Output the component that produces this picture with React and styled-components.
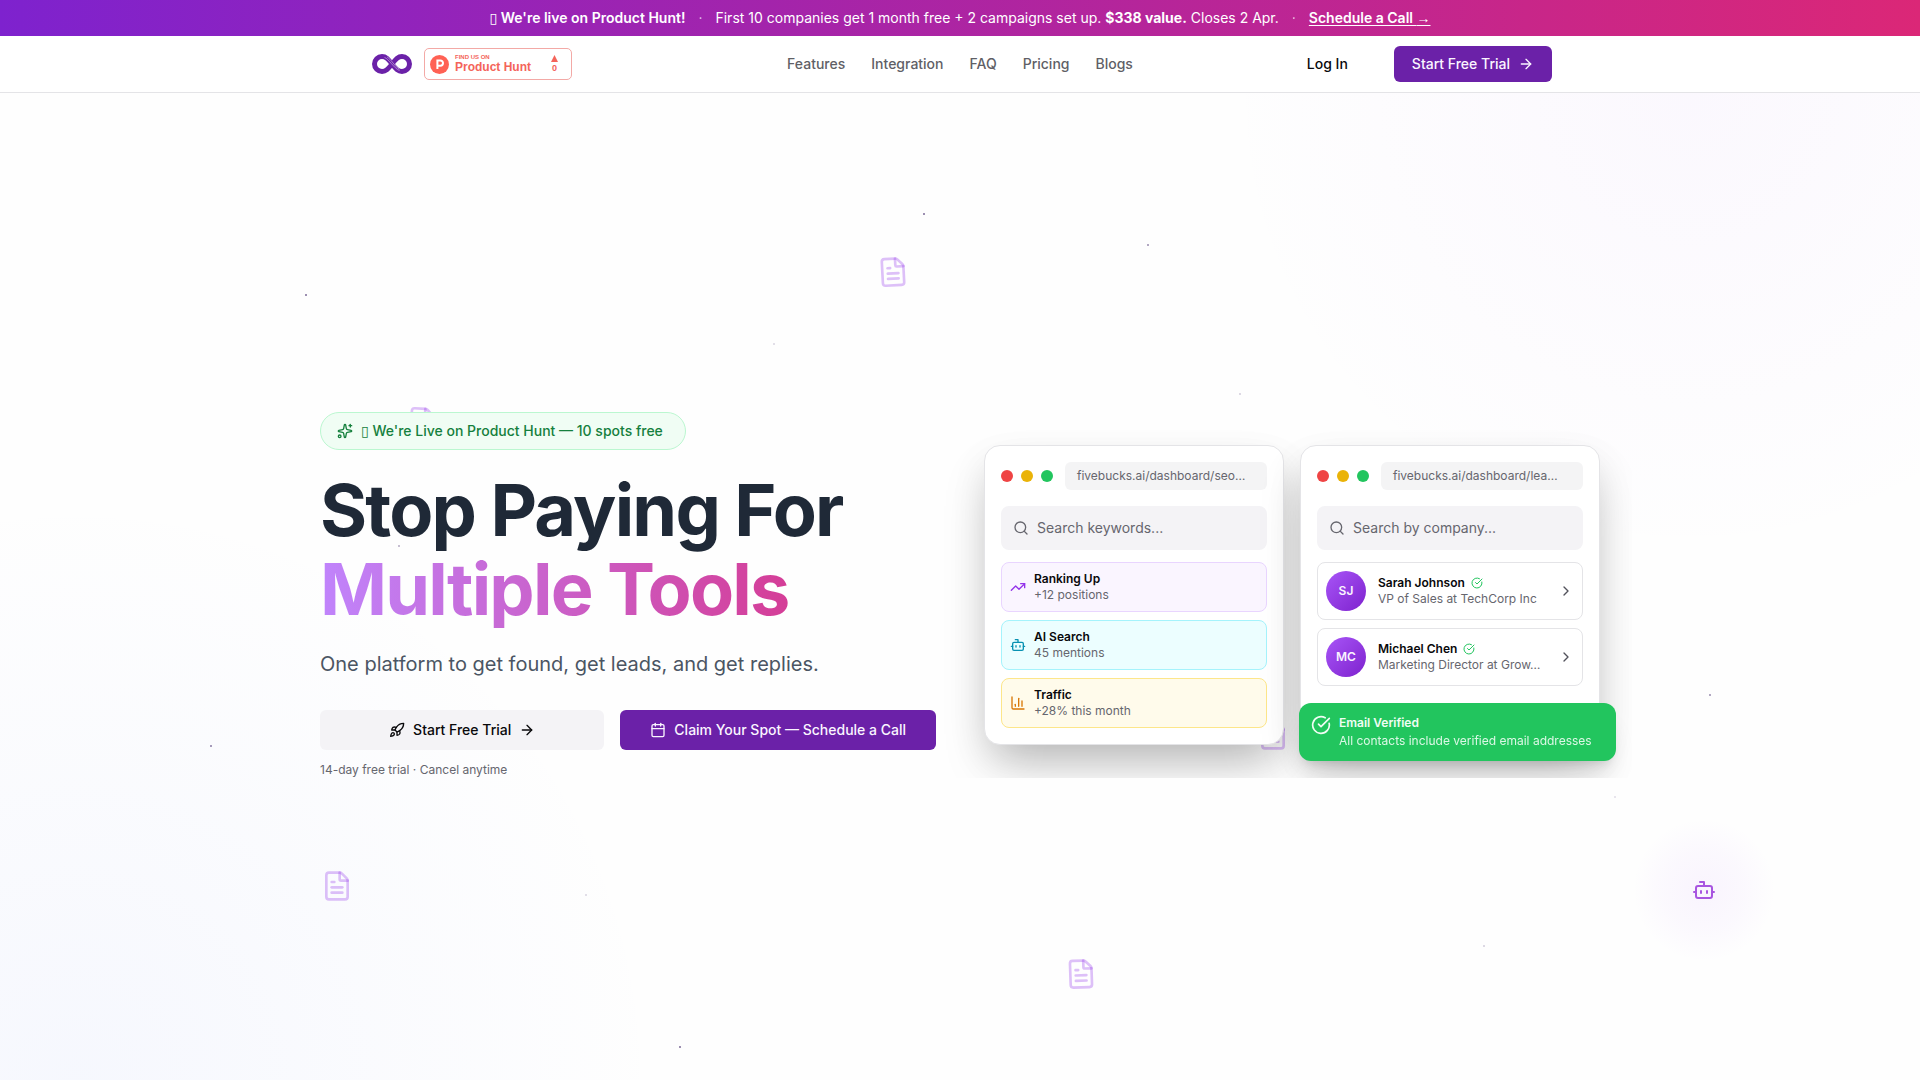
import React from 'react';
import styled, { createGlobalStyle } from 'styled-components';
import {
  ArrowRight,
  Bot,
  Calendar,
  ChartColumn,
  ChevronRight,
  CircleCheckBig,
  FileText,
  Rocket,
  Search,
  Sparkles,
  TrendingUp,
} from 'lucide-react';

const GlobalStyle = createGlobalStyle`
  *, *::before, *::after {
    box-sizing: border-box;
  }
  body {
    margin: 0;
    background: #fefefe;
    color: #09090b;
    font-family: Inter, 'Liberation Sans', sans-serif;
    font-size: 14px;
    line-height: 20px;
  }
  h1, p, ul {
    margin: 0;
    padding: 0;
  }
  ul {
    list-style: none;
  }
  a {
    color: inherit;
    text-decoration: none;
  }
  button, input {
    font: inherit;
  }
`;

const Page = styled.div`
  min-height: 100vh;
  display: flex;
  flex-direction: column;
`;

const Banner = styled.div`
  display: flex;
  align-items: center;
  justify-content: center;
  gap: 13px;
  padding: 8px 16px;
  background: linear-gradient(90deg, #7e22ce, #db2777);
  color: #fff;

  strong {
    font-weight: 600;
  }
  a {
    font-weight: 600;
    text-decoration: underline;
    text-underline-offset: 2px;
  }
`;

const Dot = styled.span`
  opacity: 0.7;
`;

const LinkArrow = styled.span`
  font-family: 'Liberation Sans', Arial, sans-serif;
`;

const Glyph = styled.span`
  font-family: 'DejaVu Sans', sans-serif;
  font-weight: 400;
`;

const Header = styled.header`
  background: #fff;
  border-bottom: 1px solid #e4e4e7;
`;

const HeaderInner = styled.div`
  max-width: 1280px;
  margin: 0 auto;
  padding: 0 48px;
  height: 56px;
  display: grid;
  grid-template-columns: 1fr auto 1fr;
  align-items: center;
`;

const Brand = styled.div`
  display: flex;
  align-items: center;
  gap: 12px;
  padding-left: 4px;
`;

const HuntBadge = styled.a`
  display: flex;
  align-items: center;
  width: 148px;
  height: 32px;
  padding: 0 13px 0 5px;
  gap: 6px;
  border: 1px solid #f3a9a6;
  border-radius: 5px;
  background: #fff;
  color: #f4645a;
  font-family: 'Liberation Sans', Arial, sans-serif;
  font-weight: 700;
`;

const HuntText = styled.span`
  flex: 1;
  display: flex;
  flex-direction: column;
  font-size: 12px;
  line-height: 14px;

  small {
    font-size: 6px;
    line-height: 6px;
  }
`;

const HuntVotes = styled.span`
  display: flex;
  flex-direction: column;
  align-items: center;
  gap: 2px;
  font-size: 9px;
  line-height: 9px;
`;

const NavLinks = styled.ul`
  display: flex;
  gap: 26px;
  color: #5f5f66;
  font-weight: 500;
`;

const HeaderActions = styled.div`
  display: flex;
  justify-content: flex-end;
  align-items: center;
  gap: 28px;
`;

const Button = styled.button`
  display: inline-flex;
  align-items: center;
  justify-content: center;
  flex: ${({ $large }) => ($large ? '1 1 0' : 'none')};
  gap: 8px;
  height: ${({ $large }) => ($large ? 40 : 36)}px;
  padding: 0 ${({ $large }) => ($large ? 30 : 18)}px;
  border: 0;
  border-radius: 6px;
  font-weight: 500;
  white-space: nowrap;
  cursor: pointer;
  background: ${({ $variant }) =>
    ({ primary: '#6b21a8', muted: '#f4f3f6', ghost: 'transparent' })[$variant]};
  color: ${({ $variant }) => ($variant === 'primary' ? '#faf5ff' : '#09090b')};
`;

const Main = styled.main`
  position: relative;
  flex: 1;
  display: flex;
  align-items: center;
  justify-content: center;
  padding: 32px 0 16px;
  overflow: hidden;
  background:
    radial-gradient(circle at 88% 0%, rgba(168, 85, 247, 0.035), transparent 24%),
    radial-gradient(circle at 4% 100%, rgba(96, 130, 250, 0.05), transparent 28%);
`;

/* decorations scattered over the hero canvas */
const Floating = styled.span`
  position: absolute;
  left: ${({ $x }) => $x}%;
  top: ${({ $y }) => $y}%;
  display: flex;
  color: rgba(147, 51, 234, 0.3);
  transform: translate(-50%, -50%) rotate(${({ $tilt }) => $tilt || 0}deg);
`;

const Particle = styled.span`
  position: absolute;
  left: ${({ $x }) => $x}%;
  top: ${({ $y }) => $y}%;
  width: 2px;
  height: 2px;
  border-radius: 50%;
  background: #6d5a8c;
  opacity: ${({ $o }) => $o};
  transform: translate(-50%, -50%);
`;

const BotGlow = styled.span`
  position: absolute;
  left: 88.75%;
  top: 80.8%;
  display: flex;
  padding: 60px;
  border-radius: 50%;
  color: #a855e0;
  background: radial-gradient(circle, rgba(168, 85, 247, 0.06), rgba(168, 85, 247, 0.03) 40%, transparent 70%);
  transform: translate(-50%, -50%);
`;

const Hero = styled.section`
  position: relative;
  width: 100%;
  max-width: 1344px;
  padding: 0 32px;
  display: grid;
  grid-template-columns: 1fr 1fr;
  gap: 48px;
  align-items: center;
  overflow: hidden;
`;

const Intro = styled.div`
  display: flex;
  flex-direction: column;
  align-items: flex-start;
`;

const Pill = styled.div`
  display: flex;
  align-items: center;
  gap: 8px;
  padding: 8px 22px 8px 16px;
  border: 1px solid #bbf7d0;
  border-radius: 999px;
  background: #f0fdf4;
  color: #15803d;
  font-weight: 500;
`;

const Title = styled.h1`
  align-self: stretch;
  margin-top: 20px;
  font-size: 72px;
  line-height: 79px;
  font-weight: 700;
  letter-spacing: -0.025em;
  color: #1f2937;
  white-space: nowrap;

  span {
    display: block;
    background: linear-gradient(90deg, #c084fc, #db2777);
    background-clip: text;
    color: transparent;
  }
`;

const Lead = styled.p`
  margin-top: 22px;
  font-size: 20px;
  line-height: 28px;
  color: #4b5563;
`;

const Actions = styled.div`
  display: flex;
  align-self: stretch;
  gap: 16px;
  margin-top: 32px;
`;

const Note = styled.p`
  margin-top: 12px;
  font-size: 12px;
  line-height: 16px;
  color: #66666e;
`;

const Windows = styled.div`
  display: grid;
  grid-template-columns: 1fr 1fr;
  gap: 16px;
`;

const Window = styled.div`
  position: relative;
  min-width: 0;
  padding: 16px;
  border: 1px solid #e4e4e7;
  border-radius: 16px;
  background: #fff;
  box-shadow: 0 25px 50px -12px rgba(0, 0, 0, 0.25), 0 16px 36px rgba(0, 0, 0, 0.08);
`;

const WindowBar = styled.div`
  display: flex;
  align-items: center;
  gap: 8px;
`;

const Light = styled.span`
  flex: none;
  width: 12px;
  height: 12px;
  border-radius: 50%;
  background: ${({ $color }) => $color};
`;

const Address = styled.div`
  flex: 1;
  min-width: 0;
  margin-left: 4px;
  padding: 6px 12px;
  border-radius: 6px;
  background: #f4f4f5;
  color: #66666e;
  font-size: 12px;
  line-height: 16px;
  white-space: nowrap;
`;

const SearchBox = styled.label`
  display: flex;
  align-items: center;
  gap: 8px;
  height: 44px;
  margin: 16px 0 12px;
  padding: 0 12px;
  border-radius: 8px;
  background: #f4f3f6;
  color: #66666e;

  svg {
    flex: none;
  }
  input {
    flex: 1;
    min-width: 0;
    padding: 0;
    border: 0;
    outline: 0;
    background: transparent;
  }
  input::placeholder {
    color: #66666e;
    opacity: 1;
  }
`;

const List = styled.ul`
  display: flex;
  flex-direction: column;
  gap: 8px;
`;

const tones = {
  purple: ['#faf5ff', '#e9d5ff', '#9333ea'],
  cyan: ['#ecfeff', '#a5f3fc', '#0891b2'],
  amber: ['#fffbeb', '#fde68a', '#d97706'],
};

const Stat = styled.li`
  display: flex;
  align-items: center;
  gap: 8px;
  padding: 8px;
  border: 1px solid ${({ $tone }) => tones[$tone][1]};
  border-radius: 8px;
  background: ${({ $tone }) => tones[$tone][0]};

  svg {
    color: ${({ $tone }) => tones[$tone][2]};
  }
`;

const Contact = styled.li`
  display: flex;
  align-items: center;
  gap: 12px;
  padding: 8px;
  border: 1px solid #e4e4e7;
  border-radius: 8px;
  background: #fff;
`;

const Lines = styled.div`
  flex: 1;
  min-width: 0;
  font-size: 12px;
  line-height: 16px;

  strong {
    display: flex;
    align-items: center;
    gap: 6px;
    font-weight: 600;
  }
  strong svg {
    color: #22c55e;
  }
  p {
    white-space: nowrap;
    color: #66666e;
  }
`;

const Avatar = styled.span`
  flex: none;
  width: 40px;
  height: 40px;
  display: grid;
  place-items: center;
  border-radius: 50%;
  background: linear-gradient(135deg, #a855f7, #7e22ce);
  color: #faf5ff;
  font-size: 12px;
  font-weight: 600;
`;

const Chevron = styled(ChevronRight)`
  flex: none;
  color: #52525b;
`;

const Toast = styled.div`
  position: absolute;
  left: -2px;
  right: -17px;
  bottom: -17px;
  display: flex;
  gap: 8px;
  padding: 12px;
  border-radius: 12px;
  background: #22c55e;
  color: #f0fdf4;
  font-size: 12px;
  line-height: 16px;
  white-space: nowrap;
  box-shadow: 0 20px 25px -5px rgba(0, 0, 0, 0.1), 0 8px 10px -6px rgba(0, 0, 0, 0.1);

  strong {
    font-weight: 600;
  }
  p {
    margin-top: 2px;
    opacity: 0.9;
  }
`;

const links = ['Features', 'Integration', 'FAQ', 'Pricing', 'Blogs'];

const particles = [
  [48.1, 12.3, 0.9], [59.8, 15.4, 0.7], [15.95, 20.5, 0.9], [40.3, 25.4, 0.25],
  [64.6, 30.5, 0.3], [20.8, 45.9, 0.5], [11, 66.2, 0.8], [89.05, 61, 0.7],
  [30.5, 81.3, 0.25], [84.1, 71.3, 0.2], [77.3, 86.4, 0.3], [35.4, 96.7, 0.9],
];

const documents = [
  [46.5, 18.1, -3], [22, 33.3, 3], [17.55, 80.3, 0], [56.3, 89.3, -2], [66.3, 65, 0],
];

const stats = [
  { tone: 'purple', icon: TrendingUp, title: 'Ranking Up', text: '+12 positions' },
  { tone: 'cyan', icon: Bot, title: 'AI Search', text: '45 mentions' },
  { tone: 'amber', icon: ChartColumn, title: 'Traffic', text: '+28% this month' },
];

const contacts = [
  { initials: 'SJ', name: 'Sarah Johnson', role: 'VP of Sales at TechCorp Inc' },
  { initials: 'MC', name: 'Michael Chen', role: 'Marketing Director at Grow…' },
];

const Logo = () => (
  <svg width="40" height="20" viewBox="0 0 40 20" fill="none" aria-hidden="true">
    <path
      d="M20 10C16 5 14 2.5 10 2.5a7.5 7.5 0 0 0 0 15c4 0 6-2.5 10-7.5s6-7.5 10-7.5a7.5 7.5 0 0 1 0 15c-4 0-6-2.5-10-7.5Z"
      stroke="#6b21a8"
      strokeWidth="5"
    />
    <path d="M12.5 3.5c4 1 9.5 11 15 13M15 2.8c4 2.2 8 10.2 12.5 12.5" stroke="#c4a5de" strokeWidth="0.7" />
  </svg>
);

const HuntLogo = () => (
  <svg width="19" height="19" viewBox="0 0 19 19" aria-hidden="true">
    <circle cx="9.5" cy="9.5" r="9.5" fill="#ff6154" />
    <path d="M7.4 14V5.5h3a2.6 2.6 0 0 1 0 5.2h-3" fill="none" stroke="#fff" strokeWidth="2" />
  </svg>
);

const BrowserWindow = ({ address, placeholder, children }) => (
  <Window>
    <WindowBar>
      <Light $color="#ef4444" />
      <Light $color="#eab308" />
      <Light $color="#22c55e" />
      <Address>{address}</Address>
    </WindowBar>
    <SearchBox>
      <Search size={16} />
      <input type="text" placeholder={placeholder} aria-label={placeholder} />
    </SearchBox>
    {children}
  </Window>
);

const App = () => (
  <>
    <GlobalStyle />
    <Page>
      <Banner>
        <strong>
          <Glyph>▯</Glyph> We're live on Product Hunt!
        </strong>
        <Dot>·</Dot>
        <span>
          First 10 companies get 1 month free + 2 campaigns set up. <b>$338 value.</b> Closes 2 Apr.
        </span>
        <Dot>·</Dot>
        <a href="#call">
          Schedule a Call <LinkArrow>→</LinkArrow>
        </a>
      </Banner>

      <Header>
        <HeaderInner>
          <Brand>
            <Logo />
            <HuntBadge href="#product-hunt">
              <HuntLogo />
              <HuntText>
                <small>FIND US ON</small>
                Product Hunt
              </HuntText>
              <HuntVotes>
                <svg width="7" height="7" viewBox="0 0 7 7" aria-hidden="true">
                  <path d="M3.5 0 7 7H0Z" fill="#f4645a" />
                </svg>
                0
              </HuntVotes>
            </HuntBadge>
          </Brand>
          <nav>
            <NavLinks>
              {links.map((link) => (
                <li key={link}>
                  <a href={`#${link.toLowerCase()}`}>{link}</a>
                </li>
              ))}
            </NavLinks>
          </nav>
          <HeaderActions>
            <Button $variant="ghost">Log In</Button>
            <Button $variant="primary">
              Start Free Trial
              <ArrowRight size={16} />
            </Button>
          </HeaderActions>
        </HeaderInner>
      </Header>

      <Main>
        {particles.map(([x, y, o]) => (
          <Particle key={`${x}-${y}`} $x={x} $y={y} $o={o} />
        ))}
        {documents.map(([x, y, tilt]) => (
          <Floating key={`${x}-${y}`} $x={x} $y={y} $tilt={tilt}>
            <FileText size={32} />
          </Floating>
        ))}
        <BotGlow>
          <Bot size={24} />
        </BotGlow>

        <Hero>
          <Intro>
            <Pill>
              <Sparkles size={16} />
              <span>
                <Glyph>▯</Glyph> We're Live on Product Hunt — 10 spots free
              </span>
            </Pill>
            <Title>
              Stop Paying For
              <span>Multiple Tools</span>
            </Title>
            <Lead>One platform to get found, get leads, and get replies.</Lead>
            <Actions>
              <Button $variant="muted" $large>
                <Rocket size={16} />
                Start Free Trial
                <ArrowRight size={16} />
              </Button>
              <Button $variant="primary" $large>
                <Calendar size={16} />
                Claim Your Spot — Schedule a Call
              </Button>
            </Actions>
            <Note>14-day free trial · Cancel anytime</Note>
          </Intro>

          <Windows>
            <BrowserWindow address="fivebucks.ai/dashboard/seo…" placeholder="Search keywords...">
              <List>
                {stats.map(({ tone, icon: Icon, title, text }) => (
                  <Stat key={title} $tone={tone}>
                    <Icon size={16} />
                    <Lines>
                      <strong>{title}</strong>
                      <p>{text}</p>
                    </Lines>
                  </Stat>
                ))}
              </List>
            </BrowserWindow>
            <BrowserWindow address="fivebucks.ai/dashboard/lea…" placeholder="Search by company...">
              <List>
                {contacts.map(({ initials, name, role }) => (
                  <Contact key={name}>
                    <Avatar>{initials}</Avatar>
                    <Lines>
                      <strong>
                        {name}
                        <CircleCheckBig size={12} />
                      </strong>
                      <p>{role}</p>
                    </Lines>
                    <Chevron size={16} />
                  </Contact>
                ))}
              </List>
              <Toast>
                <CircleCheckBig size={20} />
                <div>
                  <strong>Email Verified</strong>
                  <p>All contacts include verified email addresses</p>
                </div>
              </Toast>
            </BrowserWindow>
          </Windows>
        </Hero>
      </Main>
    </Page>
  </>
);

export default App;
